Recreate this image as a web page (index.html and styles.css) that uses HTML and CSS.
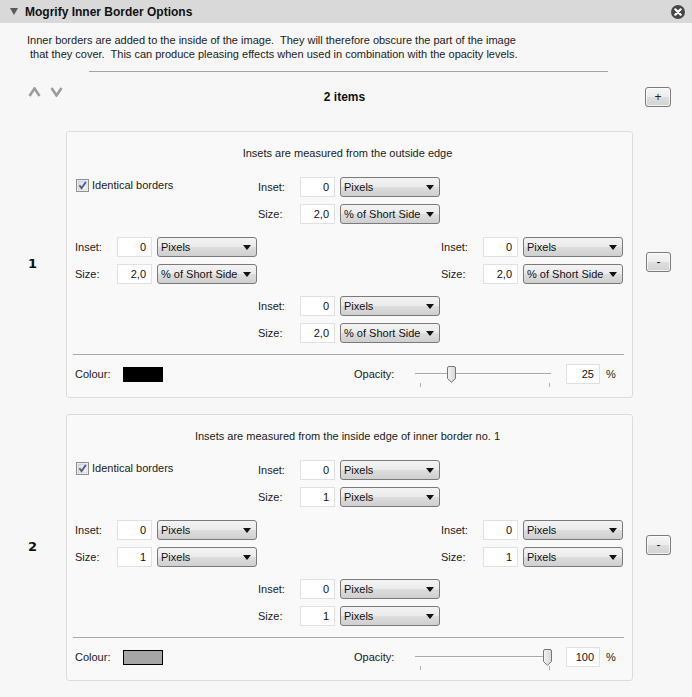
FILE: index.html
```html
<!DOCTYPE html>
<html>
<head>
<meta charset="utf-8">
<link rel="stylesheet" href="styles.css">
</head>
<body>
<div class="header">
  <span class="tri"></span>
  <span class="title">Mogrify Inner Border Options</span>
  <svg class="close" width="14" height="14" viewBox="0 0 14 14"><circle cx="7" cy="7" r="7" fill="#474747"/><path d="M4.3 4.3 L9.7 9.7 M9.7 4.3 L4.3 9.7" stroke="#fff" stroke-width="2.2" stroke-linecap="round"/></svg>
</div>
<div class="content">
  <p class="desc">Inner borders are added to the inside of the image.  They will therefore obscure the part of the image
 that they cover.  This can produce pleasing effects when used in combination with the opacity levels.</p>
  <div class="rule"></div>
  <div class="toolbar">
    <div class="arrows">
      <svg width="13" height="10" viewBox="0 0 13 10"><path d="M1.5 9 L6.5 1.5 L11.5 9" fill="none" stroke="#9c9c9c" stroke-width="2.6"/></svg>
      <svg width="13" height="10" viewBox="0 0 13 10"><path d="M1.5 1 L6.5 8.5 L11.5 1" fill="none" stroke="#9c9c9c" stroke-width="2.6"/></svg>
    </div>
    <div class="count">2 items</div>
    <div class="side"><div class="btn">+</div></div>
  </div>

  <div class="item">
    <div class="num">1</div>
    <div class="panel">
      <div class="caption">Insets are measured from the outside edge</div>
      <div class="borders">
        <div class="check">
          <svg width="13" height="13" viewBox="0 0 13 13"><defs><linearGradient id="cb1" x1="0" y1="0" x2="1" y2="1"><stop offset="0" stop-color="#d8dbe0"/><stop offset="1" stop-color="#fbfbfb"/></linearGradient></defs><rect x="0.5" y="0.5" width="12" height="12" fill="#fff" stroke="#8e8f8f"/><rect x="2" y="2" width="9" height="9" fill="url(#cb1)" stroke="#b5bac2" stroke-width="0.6"/><path d="M3.4 6.2 L5.6 9.2 L9.8 3" fill="none" stroke="#4a5d8a" stroke-width="1.9"/></svg>
          <span>Identical borders</span>
        </div>
        <div class="group g-top">
          <div class="row"><span class="lbl">Inset:</span><span class="inp">0</span><span class="sel"><span>Pixels</span><i></i></span></div>
          <div class="row"><span class="lbl">Size:</span><span class="inp">2,0</span><span class="sel"><span>% of Short Side</span><i></i></span></div>
        </div>
        <div class="group g-left">
          <div class="row"><span class="lbl">Inset:</span><span class="inp">0</span><span class="sel"><span>Pixels</span><i></i></span></div>
          <div class="row"><span class="lbl">Size:</span><span class="inp">2,0</span><span class="sel"><span>% of Short Side</span><i></i></span></div>
        </div>
        <div class="group g-right">
          <div class="row"><span class="lbl">Inset:</span><span class="inp">0</span><span class="sel"><span>Pixels</span><i></i></span></div>
          <div class="row"><span class="lbl">Size:</span><span class="inp">2,0</span><span class="sel"><span>% of Short Side</span><i></i></span></div>
        </div>
        <div class="group g-bottom">
          <div class="row"><span class="lbl">Inset:</span><span class="inp">0</span><span class="sel"><span>Pixels</span><i></i></span></div>
          <div class="row"><span class="lbl">Size:</span><span class="inp">2,0</span><span class="sel"><span>% of Short Side</span><i></i></span></div>
        </div>
      </div>
      <div class="sep"></div>
      <div class="colour-row">
        <span class="lbl">Colour:</span>
        <span class="swatch swatch-black"></span>
        <span></span>
        <span class="lbl">Opacity:</span>
        <div class="slider">
          <span class="track"></span>
          <span class="tick tick-l"></span><span class="tick tick-r"></span>
          <svg class="thumb" style="left:32px" width="9" height="17" viewBox="0 0 9 17"><defs><linearGradient id="th1" x1="0" y1="0" x2="1" y2="0"><stop offset="0" stop-color="#f4f4f4"/><stop offset="1" stop-color="#d6d6d6"/></linearGradient></defs><path d="M0.5 2 Q0.5 0.5 2 0.5 H7 Q8.5 0.5 8.5 2 V12.5 L4.5 16.3 L0.5 12.5 Z" fill="url(#th1)" stroke="#777"/></svg>
        </div>
        <span class="inp opac">25</span>
        <span class="pct">%</span>
      </div>
    </div>
    <div class="side"><div class="btn">-</div></div>
  </div>

  <div class="item item2">
    <div class="num">2</div>
    <div class="panel">
      <div class="caption">Insets are measured from the inside edge of inner border no. 1</div>
      <div class="borders">
        <div class="check">
          <svg width="13" height="13" viewBox="0 0 13 13"><defs><linearGradient id="cb2" x1="0" y1="0" x2="1" y2="1"><stop offset="0" stop-color="#d8dbe0"/><stop offset="1" stop-color="#fbfbfb"/></linearGradient></defs><rect x="0.5" y="0.5" width="12" height="12" fill="#fff" stroke="#8e8f8f"/><rect x="2" y="2" width="9" height="9" fill="url(#cb2)" stroke="#b5bac2" stroke-width="0.6"/><path d="M3.4 6.2 L5.6 9.2 L9.8 3" fill="none" stroke="#4a5d8a" stroke-width="1.9"/></svg>
          <span>Identical borders</span>
        </div>
        <div class="group g-top">
          <div class="row"><span class="lbl">Inset:</span><span class="inp">0</span><span class="sel"><span>Pixels</span><i></i></span></div>
          <div class="row"><span class="lbl">Size:</span><span class="inp">1</span><span class="sel"><span>Pixels</span><i></i></span></div>
        </div>
        <div class="group g-left">
          <div class="row"><span class="lbl">Inset:</span><span class="inp">0</span><span class="sel"><span>Pixels</span><i></i></span></div>
          <div class="row"><span class="lbl">Size:</span><span class="inp">1</span><span class="sel"><span>Pixels</span><i></i></span></div>
        </div>
        <div class="group g-right">
          <div class="row"><span class="lbl">Inset:</span><span class="inp">0</span><span class="sel"><span>Pixels</span><i></i></span></div>
          <div class="row"><span class="lbl">Size:</span><span class="inp">1</span><span class="sel"><span>Pixels</span><i></i></span></div>
        </div>
        <div class="group g-bottom">
          <div class="row"><span class="lbl">Inset:</span><span class="inp">0</span><span class="sel"><span>Pixels</span><i></i></span></div>
          <div class="row"><span class="lbl">Size:</span><span class="inp">1</span><span class="sel"><span>Pixels</span><i></i></span></div>
        </div>
      </div>
      <div class="sep"></div>
      <div class="colour-row">
        <span class="lbl">Colour:</span>
        <span class="swatch swatch-grey"></span>
        <span></span>
        <span class="lbl">Opacity:</span>
        <div class="slider">
          <span class="track"></span>
          <span class="tick tick-l"></span><span class="tick tick-r"></span>
          <svg class="thumb" style="left:128px" width="9" height="17" viewBox="0 0 9 17"><defs><linearGradient id="th2" x1="0" y1="0" x2="1" y2="0"><stop offset="0" stop-color="#f4f4f4"/><stop offset="1" stop-color="#d6d6d6"/></linearGradient></defs><path d="M0.5 2 Q0.5 0.5 2 0.5 H7 Q8.5 0.5 8.5 2 V12.5 L4.5 16.3 L0.5 12.5 Z" fill="url(#th2)" stroke="#777"/></svg>
        </div>
        <span class="inp opac">100</span>
        <span class="pct">%</span>
      </div>
    </div>
    <div class="side"><div class="btn">-</div></div>
  </div>
</div>
</body>
</html>
```

FILE: styles.css
```css
* { box-sizing: border-box; }

html, body {
  margin: 0;
  padding: 0;
}

body {
  width: 692px;
  height: 697px;
  overflow: hidden;
  background: #f7f7f7;
  font-family: "Liberation Sans", Arial, sans-serif;
  font-size: 11px;
  color: #1a1a1a;
}

.header {
  height: 23px;
  background: #d9d9d9;
  display: flex;
  align-items: center;
  padding: 0 7px 0 10px;
}

.tri {
  width: 0;
  height: 0;
  border-left: 4px solid transparent;
  border-right: 4px solid transparent;
  border-top: 7px solid #5a5a5a;
  margin-right: 7px;
}

.title {
  flex: 1;
  font-weight: bold;
  font-size: 12px;
  color: #111;
}

.close { display: block; }

.content {
  padding-top: 10px;
}

.desc {
  margin: 0 0 0 27px;
  white-space: pre;
  line-height: 14px;
  color: #222;
}

.rule {
  margin: 10px 0 0 89px;
  width: 519px;
  height: 1px;
  background: #a3a3a3;
}

.toolbar {
  margin-top: 15px;
  height: 20px;
  display: grid;
  grid-template-columns: 66px 567px 38px;
  align-items: center;
}

.arrows {
  display: flex;
  gap: 9px;
  padding-left: 28px;
  align-self: start;
}

.arrows svg { display: block; }

.count {
  text-align: center;
  font-weight: bold;
  font-size: 12px;
  padding-right: 10px;
  color: #111;
}

.btn {
  width: 26px;
  height: 20px;
  border: 1px solid #7b7b7b;
  border-radius: 3px;
  background: linear-gradient(#f6f6f6, #ececec 48%, #dedede 52%, #d2d2d2);
  display: flex;
  align-items: center;
  justify-content: center;
  font-size: 12px;
  color: #222;
  box-shadow: inset 0 0 0 1px rgba(255,255,255,0.7);
}

.item {
  margin-top: 24px;
  display: grid;
  grid-template-columns: 66px 567px 38px;
  align-items: center;
}

.item2 { margin-top: 16px; }

.num {
  font-family: "DejaVu Sans", sans-serif;
  font-weight: bold;
  font-size: 13px;
  padding-left: 28px;
  padding-bottom: 3px;
  color: #111;
}

.side {
  display: flex;
  align-items: center;
  padding-left: 12px;
}

.item .side {
  padding-left: 13px;
  padding-bottom: 5px;
}

.panel {
  height: 267px;
  border: 1px solid #dcdcdc;
  border-radius: 3px;
  background: #f9f9f9;
  padding: 14px 8px 13px 8px;
}

.caption {
  text-align: center;
  line-height: 14px;
  margin-bottom: 17px;
  padding-right: 4px;
  color: #1a1a1a;
}

.borders {
  display: grid;
  grid-template-columns: 183px 183px 183px;
  grid-template-rows: 60px 59px 47px;
}

.check {
  grid-column: 1;
  grid-row: 1;
  display: flex;
  align-items: center;
  height: 16px;
  padding-left: 1px;
  gap: 3px;
}

.check svg { display: block; }

.g-top { grid-column: 2; grid-row: 1; }
.g-left { grid-column: 1; grid-row: 2; }
.g-right { grid-column: 3; grid-row: 2; }
.g-bottom { grid-column: 2; grid-row: 3; }

.group {
  display: flex;
  flex-direction: column;
  gap: 7px;
}

.row {
  display: flex;
  align-items: center;
  height: 20px;
}

.lbl {
  color: #1a1a1a;
}

.row .lbl {
  width: 42px;
}

.inp {
  height: 20px;
  background: #fff;
  border: 1px solid #e1e1e1;
  text-align: right;
  padding-right: 5px;
  line-height: 18px;
  color: #111;
}

.row .inp {
  width: 35px;
}

.sel {
  width: 100px;
  height: 20px;
  margin-left: 5px;
  border: 1px solid #7a7a7a;
  border-radius: 3px;
  background: linear-gradient(#f3f3f3, #ebebeb 48%, #dddddd 52%, #cfcfcf);
  display: flex;
  align-items: center;
  justify-content: space-between;
  padding: 0 5px 0 3px;
  color: #111;
}

.sel i {
  width: 0;
  height: 0;
  border-left: 4px solid transparent;
  border-right: 4px solid transparent;
  border-top: 5px solid #111;
}

.sep {
  margin: 11px 0 0 -2px;
  height: 1px;
  background: #a8a8a8;
}

.colour-row {
  margin-top: 9px;
  height: 20px;
  display: grid;
  grid-template-columns: 48px 40px 191px 61px 136px 15px 34px auto;
  align-items: center;
}

.colour-row .slider { grid-column: 5; }
.colour-row .opac { grid-column: 7; }
.colour-row .pct { grid-column: 8; padding-left: 6px; }

.swatch {
  height: 15px;
  border: 1px solid #000;
}

.swatch-black { background: #000; }
.swatch-grey { background: #a6a6a6; }

.slider {
  position: relative;
  height: 20px;
}

.track {
  position: absolute;
  left: 0;
  right: 0;
  top: 9px;
  height: 2px;
  border-top: 1px solid #a8a8a8;
  border-bottom: 1px solid #fdfdfd;
}

.tick {
  position: absolute;
  top: 19px;
  width: 1px;
  height: 4px;
  background: #b0b0b0;
}

.tick-l { left: 5px; }
.tick-r { left: 134px; }

.thumb {
  position: absolute;
  top: 2px;
  display: block;
}

.opac {
  width: 34px;
  padding-right: 5px;
}

.pct { color: #1a1a1a; }
```
